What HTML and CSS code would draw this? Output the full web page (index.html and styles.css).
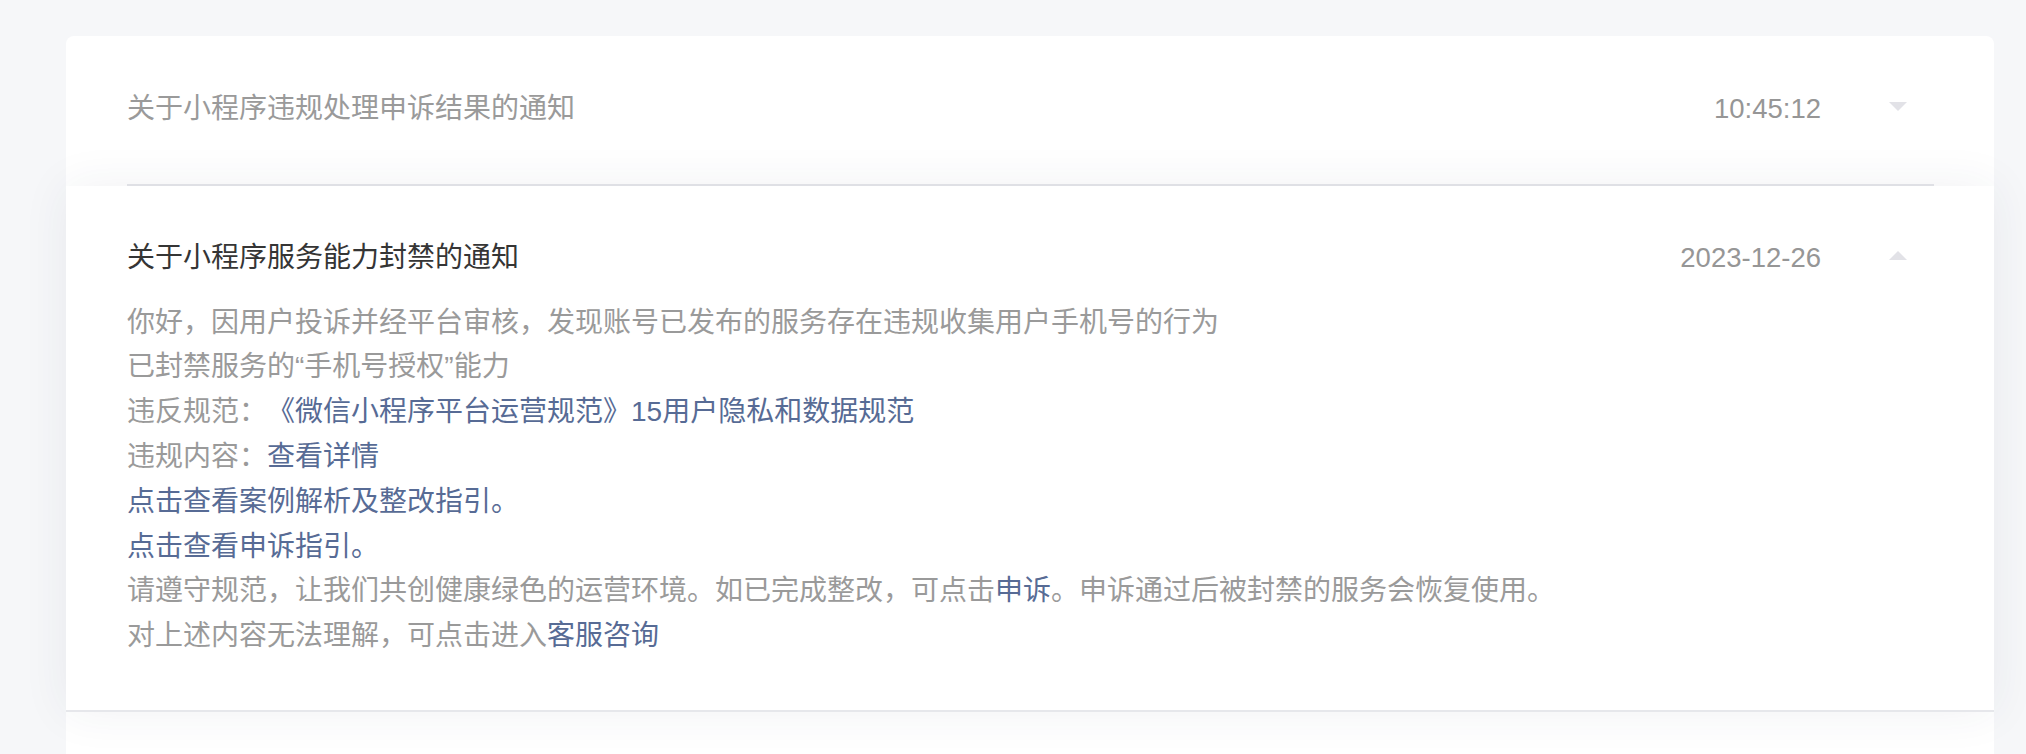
FILE: index.html
```html
<!DOCTYPE html>
<html lang="zh-CN">
<head>
<meta charset="utf-8">
<title>通知</title>
<link rel="stylesheet" href="styles.css">
</head>
<body>
<div class="page">
  <div class="list">
    <div class="item">
      <div class="item-head">
        <div class="item-title muted">关于小程序违规处理申诉结果的通知</div>
        <div class="item-time">10:45:12</div>
        <span class="arrow arrow-down"></span>
      </div>
    </div>
    <div class="item item-open">
      <div class="open-head">
        <div class="item-title">关于小程序服务能力封禁的通知</div>
        <div class="item-time">2023-12-26</div>
        <span class="arrow arrow-up"></span>
      </div>
      <div class="item-body">
        <p>你好，因用户投诉并经平台审核，发现账号已发布的服务存在违规收集用户手机号的行为</p>
        <p>已封禁服务的“手机号授权”能力</p>
        <p>违反规范：<a class="link">《微信小程序平台运营规范》15用户隐私和数据规范</a></p>
        <p>违规内容：<a class="link">查看详情</a></p>
        <p><a class="link">点击查看案例解析及整改指引。</a></p>
        <p><a class="link">点击查看申诉指引。</a></p>
        <p>请遵守规范，让我们共创健康绿色的运营环境。如已完成整改，可点击<a class="link">申诉</a>。申诉通过后被封禁的服务会恢复使用。</p>
        <p>对上述内容无法理解，可点击进入<a class="link">客服咨询</a></p>
      </div>
    </div>
    <div class="item item-rest"></div>
  </div>
</div>
</body>
</html>
```

FILE: styles.css
```css
html, body {
  margin: 0;
  padding: 0;
  background: #f6f7f9;
  overflow: hidden;
}

body {
  font-family: "Liberation Sans", "Noto Sans CJK SC", sans-serif;
  font-size: 28px;
  line-height: 44.8px;
  color: #999999;
  text-spacing-trim: space-all;
}

.page {
  padding: 36px 32px 0 66px;
}

.list {
  background: #ffffff;
  border-radius: 8px 8px 0 0;
}

.item {
  padding: 0 60px 0 61px;
}

.item-head {
  display: flex;
  align-items: center;
  padding: 51px 0 52px;
  border-bottom: 2px solid #e6e7eb;
}

.item-title {
  flex: 1;
  color: #353535;
}

.item-title.muted {
  color: #9a9a9a;
}

.item-time {
  color: #969696;
  font-size: 27.5px;
}

.arrow {
  width: 0;
  height: 0;
  margin: 0 27px 6px 68px;
  border-left: 9px solid transparent;
  border-right: 9px solid transparent;
}

.arrow-down {
  border-top: 9px solid #e2e2e7;
}

.arrow-up {
  border-bottom: 9px solid #e2e2e7;
}

.item-open {
  position: relative;
  z-index: 1;
  background: #ffffff;
  padding-top: 50px;
  padding-bottom: 51px;
  border-bottom: 2px solid #e6e7eb;
  box-shadow: 0 0 44px rgba(40, 50, 80, 0.07);
}

.open-head {
  display: flex;
  align-items: center;
}

.item-body {
  margin-top: 20px;
}

.item-body p {
  margin: 0;
  color: #9a9a9a;
}

.link {
  color: #576b95;
  text-decoration: none;
}

.item-rest {
  height: 120px;
  background: #ffffff;
}
```
